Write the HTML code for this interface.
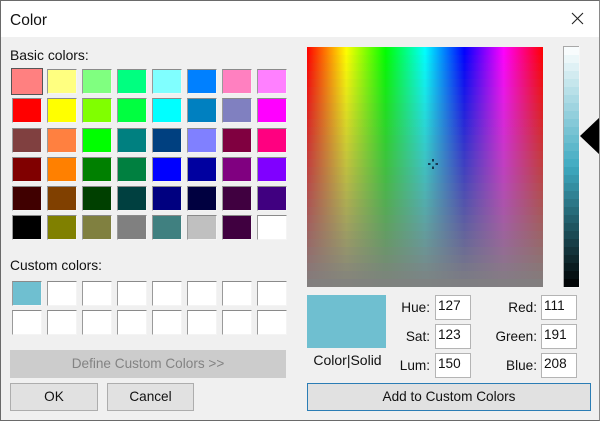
<!DOCTYPE html>
<html><head><meta charset="utf-8"><style>
html,body{margin:0;padding:0}
body{width:600px;height:421px;overflow:hidden;background:#f0f0f0;position:relative;font-family:"Liberation Sans",sans-serif;color:#111}
div{position:absolute;box-sizing:border-box}
.t{white-space:nowrap;font-size:13.6px;line-height:16px}
.grid{display:grid;grid-template-columns:repeat(8,30px);column-gap:5px}
.grid i{display:block;height:25px;box-sizing:border-box;border-top:1px solid #8a8a8a;border-left:1px solid #9a9a9a;border-right:1px solid #f4f4f4;border-bottom:1px solid #f4f4f4}
.in{width:36px;height:25px;background:#fff;border:1px solid #b4b4b4;font-size:13.6px;line-height:19px;padding-left:2px}
.r{text-align:right;width:60px}
.btn{background:#e1e1e1;border:1px solid #adadad;text-align:center;font-size:13.6px;line-height:26px}
</style></head><body>
<div style="left:0;top:0;width:600px;height:37px;background:#fff"></div>
<div class="t" style="left:10px;top:12px;font-size:15.5px;line-height:18px">Color</div>
<svg style="position:absolute;left:571px;top:12px" width="13" height="13"><path d="M1 1L12 12M12 1L1 12" stroke="#222" stroke-width="1.1" fill="none"/></svg>
<div class="t" style="left:10px;top:47px;font-size:13.9px">Basic colors:</div>
<div class="grid" style="left:12.3px;top:69px;row-gap:4.3px">
<i style="background:#ff8080;outline:1px solid #555;border-color:#ff8080"></i><i style="background:#ffff80"></i><i style="background:#80ff80"></i><i style="background:#00ff80"></i><i style="background:#80ffff"></i><i style="background:#0080ff"></i><i style="background:#ff80c0"></i><i style="background:#ff80ff"></i>
<i style="background:#ff0000"></i><i style="background:#ffff00"></i><i style="background:#80ff00"></i><i style="background:#00ff40"></i><i style="background:#00ffff"></i><i style="background:#0080c0"></i><i style="background:#8080c0"></i><i style="background:#ff00ff"></i>
<i style="background:#804040"></i><i style="background:#ff8040"></i><i style="background:#00ff00"></i><i style="background:#008080"></i><i style="background:#004080"></i><i style="background:#8080ff"></i><i style="background:#800040"></i><i style="background:#ff0080"></i>
<i style="background:#800000"></i><i style="background:#ff8000"></i><i style="background:#008000"></i><i style="background:#008040"></i><i style="background:#0000ff"></i><i style="background:#0000a0"></i><i style="background:#800080"></i><i style="background:#8000ff"></i>
<i style="background:#400000"></i><i style="background:#804000"></i><i style="background:#004000"></i><i style="background:#004040"></i><i style="background:#000080"></i><i style="background:#000040"></i><i style="background:#400040"></i><i style="background:#400080"></i>
<i style="background:#000000"></i><i style="background:#808000"></i><i style="background:#808040"></i><i style="background:#808080"></i><i style="background:#408080"></i><i style="background:#c0c0c0"></i><i style="background:#400040"></i><i style="background:#ffffff"></i>
</div>
<div class="t" style="left:10px;top:258px;font-size:13.8px">Custom colors:</div>
<div class="grid" style="left:12.3px;top:281px;row-gap:4.3px">
<i style="background:#6fbfd0"></i><i style="background:#fff"></i><i style="background:#fff"></i><i style="background:#fff"></i><i style="background:#fff"></i><i style="background:#fff"></i><i style="background:#fff"></i><i style="background:#fff"></i>
<i style="background:#fff"></i><i style="background:#fff"></i><i style="background:#fff"></i><i style="background:#fff"></i><i style="background:#fff"></i><i style="background:#fff"></i><i style="background:#fff"></i><i style="background:#fff"></i>
</div>
<div class="btn" style="left:10px;top:350px;width:276px;height:28px;background:#cccccc;border:none;color:#838383;line-height:28px">Define Custom Colors &gt;&gt;</div>
<div class="btn" style="left:10px;top:383px;width:88px;height:28px">OK</div>
<div class="btn" style="left:107px;top:383px;width:87px;height:28px">Cancel</div>
<div style="left:307px;top:46.5px;width:235.5px;height:240px;background:repeating-linear-gradient(to bottom,rgba(128,128,128,0) 0,rgba(128,128,128,0) 0),linear-gradient(to bottom,rgba(128,128,128,.017) 0 8px,rgba(128,128,128,.05) 8px 16px,rgba(128,128,128,.083) 16px 24px,rgba(128,128,128,.117) 24px 32px,rgba(128,128,128,.15) 32px 40px,rgba(128,128,128,.183) 40px 48px,rgba(128,128,128,.217) 48px 56px,rgba(128,128,128,.25) 56px 64px,rgba(128,128,128,.283) 64px 72px,rgba(128,128,128,.317) 72px 80px,rgba(128,128,128,.35) 80px 88px,rgba(128,128,128,.383) 88px 96px,rgba(128,128,128,.417) 96px 104px,rgba(128,128,128,.45) 104px 112px,rgba(128,128,128,.483) 112px 120px,rgba(128,128,128,.517) 120px 128px,rgba(128,128,128,.55) 128px 136px,rgba(128,128,128,.583) 136px 144px,rgba(128,128,128,.617) 144px 152px,rgba(128,128,128,.65) 152px 160px,rgba(128,128,128,.683) 160px 168px,rgba(128,128,128,.717) 168px 176px,rgba(128,128,128,.75) 176px 184px,rgba(128,128,128,.783) 184px 192px,rgba(128,128,128,.817) 192px 200px,rgba(128,128,128,.85) 200px 208px,rgba(128,128,128,.883) 208px 216px,rgba(128,128,128,.917) 216px 224px,rgba(128,128,128,.95) 224px 232px,rgba(128,128,128,.983) 232px 240px),linear-gradient(to right,#f00 0%,#ff0 16.67%,#0f0 33.33%,#0ff 50%,#00f 66.67%,#f0f 83.33%,#f00 100%)"></div>
<svg style="position:absolute;left:426px;top:157px" width="14" height="14"><path d="M7 2V4.5M7 9.5V12M2 7H4.5M9.5 7H12" stroke="#0a1a30" stroke-width="1.6" fill="none"/></svg>
<svg style="position:absolute;left:563px;top:46px" width="17" height="242" shape-rendering="crispEdges">
<rect x="0" y="0" width="17" height="242" fill="#f6f6f6"/>
<rect x="1" y="1" width="15" height="8" fill="rgb(248,252,253)"/><rect x="1" y="9" width="15" height="8" fill="rgb(236,247,249)"/><rect x="1" y="17" width="15" height="8" fill="rgb(223,241,245)"/><rect x="1" y="25" width="15" height="8" fill="rgb(210,235,240)"/><rect x="1" y="33" width="15" height="8" fill="rgb(197,230,236)"/><rect x="1" y="41" width="15" height="8" fill="rgb(184,224,232)"/><rect x="1" y="49" width="15" height="8" fill="rgb(171,218,228)"/><rect x="1" y="57" width="15" height="8" fill="rgb(159,212,224)"/><rect x="1" y="65" width="15" height="8" fill="rgb(146,207,220)"/><rect x="1" y="73" width="15" height="8" fill="rgb(133,201,216)"/><rect x="1" y="81" width="15" height="8" fill="rgb(120,195,211)"/><rect x="1" y="89" width="15" height="8" fill="rgb(107,190,207)"/><rect x="1" y="97" width="15" height="8" fill="rgb(94,184,203)"/><rect x="1" y="105" width="15" height="8" fill="rgb(81,178,199)"/><rect x="1" y="113" width="15" height="8" fill="rgb(69,173,195)"/><rect x="1" y="121" width="15" height="8" fill="rgb(60,164,186)"/><rect x="1" y="129" width="15" height="8" fill="rgb(56,153,174)"/><rect x="1" y="137" width="15" height="8" fill="rgb(52,142,161)"/><rect x="1" y="145" width="15" height="8" fill="rgb(48,130,148)"/><rect x="1" y="153" width="15" height="8" fill="rgb(44,119,135)"/><rect x="1" y="161" width="15" height="8" fill="rgb(39,108,122)"/><rect x="1" y="169" width="15" height="8" fill="rgb(35,96,109)"/><rect x="1" y="177" width="15" height="8" fill="rgb(31,85,96)"/><rect x="1" y="185" width="15" height="8" fill="rgb(27,74,84)"/><rect x="1" y="193" width="15" height="8" fill="rgb(23,62,71)"/><rect x="1" y="201" width="15" height="8" fill="rgb(19,51,58)"/><rect x="1" y="209" width="15" height="8" fill="rgb(15,40,45)"/><rect x="1" y="217" width="15" height="8" fill="rgb(10,28,32)"/><rect x="1" y="225" width="15" height="8" fill="rgb(6,17,19)"/><rect x="1" y="233" width="15" height="8" fill="rgb(2,6,7)"/>
<rect x="0" y="0" width="16" height="1" fill="#a8a8a8"/><rect x="0" y="0" width="1" height="241" fill="#a8a8a8"/>
</svg>
<svg style="position:absolute;left:580px;top:116px" width="20" height="40"><polygon points="0,20 20,1 20,39" fill="#000"/></svg>
<div style="left:307px;top:295px;width:79px;height:53px;background:#6fbfd0"></div>
<div class="t" style="left:307px;top:352px;width:81px;text-align:center;font-size:14px">Color|Solid</div>
<div class="t r" style="left:370px;top:300px">Hue:</div><div class="in" style="left:435px;top:295px">127</div>
<div class="t r" style="left:370px;top:329px">Sat:</div><div class="in" style="left:435px;top:324px">123</div>
<div class="t r" style="left:370px;top:358px">Lum:</div><div class="in" style="left:435px;top:353px">150</div>
<div class="t r" style="left:477px;top:300px">Red:</div><div class="in" style="left:541px;top:295px">111</div>
<div class="t r" style="left:477px;top:329px">Green:</div><div class="in" style="left:541px;top:324px">191</div>
<div class="t r" style="left:477px;top:358px">Blue:</div><div class="in" style="left:541px;top:353px">208</div>
<div class="btn" style="left:307px;top:383px;width:284px;height:28px;border:1px solid #2b7db5">Add to Custom Colors</div>
<div style="left:0;top:0;width:600px;height:421px;border:1px solid #6a6a6a;border-right-color:#8a8a8a"></div>
</body></html>
